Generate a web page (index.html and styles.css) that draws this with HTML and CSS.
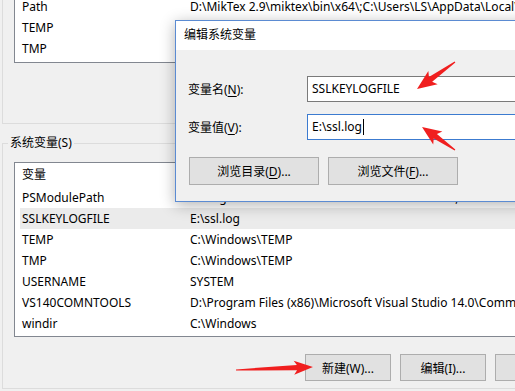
FILE: index.html
```html
<!DOCTYPE html>
<html lang="zh-CN">
<head>
  <meta charset="UTF-8">
  <title>环境变量</title>
  <link rel="stylesheet" href="styles.css">
</head>
<body>
  <div class="window">
    <div class="group-user">
      <div class="list list-user">
        <div class="row"><span class="name">Path</span><span class="value">D:\MikTex 2.9\miktex\bin\x64\;C:\Users\LS\AppData\Local\Programs</span></div>
        <div class="row"><span class="name">TEMP</span><span class="value">C:\Users\LS\AppData\Local\Temp</span></div>
        <div class="row"><span class="name">TMP</span><span class="value">C:\Users\LS\AppData\Local\Temp</span></div>
      </div>
    </div>

    <fieldset class="group-system">
      <legend>系统变量(S)</legend>
      <div class="list list-system">
        <div class="row header"><span class="name">变量</span><span class="value">值</span></div>
        <div class="row"><span class="name">PSModulePath</span><span class="value">%ProgramFiles%\WindowsPowerShell\Modules;C:\Windows</span></div>
        <div class="row selected"><span class="name">SSLKEYLOGFILE</span><span class="value">E:\ssl.log</span></div>
        <div class="row"><span class="name">TEMP</span><span class="value">C:\Windows\TEMP</span></div>
        <div class="row"><span class="name">TMP</span><span class="value">C:\Windows\TEMP</span></div>
        <div class="row"><span class="name">USERNAME</span><span class="value">SYSTEM</span></div>
        <div class="row"><span class="name">VS140COMNTOOLS</span><span class="value">D:\Program Files (x86)\Microsoft Visual Studio 14.0\Common7\Tools\</span></div>
        <div class="row"><span class="name">windir</span><span class="value">C:\Windows</span></div>
      </div>
      <div class="button-row">
        <button class="btn">新建(W)...</button>
        <button class="btn">编辑(I)...</button>
        <button class="btn">删除(L)</button>
      </div>
    </fieldset>
  </div>

  <div class="dialog">
    <div class="dialog-title">编辑系统变量</div>
    <div class="dialog-body">
      <div class="field">
        <span class="field-label">变量名(<u>N</u>):</span>
        <div class="textbox">SSLKEYLOGFILE</div>
      </div>
      <div class="field">
        <span class="field-label">变量值(<u>V</u>):</span>
        <div class="textbox focused">E:\ssl.log<span class="caret"></span></div>
      </div>
      <div class="dialog-buttons">
        <button class="btn btn-wide">浏览目录(<u>D</u>)...</button>
        <button class="btn btn-wide">浏览文件(<u>F</u>)...</button>
      </div>
    </div>
  </div>

  <!-- 红色标注箭头 -->
  <svg class="marks" width="515" height="391" viewBox="0 0 515 391">
    <g fill="#f01f1f">
      <polygon transform="translate(455 62) rotate(144.6)" points="0,-0.6 30,-2.8 27,-8 46.6,0 27,8 30,2.8 0,0.6"/>
      <polygon transform="translate(455 150) rotate(-145.1)" points="0,-0.6 24,-2.8 21,-8 40.2,0 21,8 24,2.8 0,0.6"/>
      <polygon transform="translate(236 370) rotate(-2.2)" points="0,-0.6 61,-2.6 58,-7 77,0 58,7 61,2.6 0,0.6"/>
    </g>
  </svg>
</body>
</html>
```

FILE: styles.css
```css
body {
  margin: 0;
  width: 515px;
  height: 391px;
  position: relative;
  overflow: hidden;
  background-color: #f0f0f0;
  color: #000;
  font-family: "Noto Sans", "Noto Sans CJK SC", sans-serif;
  font-size: 12px;
}
.window {
  width: 640px;
}
.group-user {
  margin-left: 2px;
  height: 123px;
  padding-left: 11px;
  border-left: 1px solid #dcdcdc;
  border-bottom: 1px solid #dcdcdc;
}
.list {
  background-color: #fff;
  border: 1px solid #828790;
  overflow: hidden;
}
.list-user {
  height: 62px;
  border-top: none;
}
.list-user .row:first-child {
  margin-top: -4px;
}
.row {
  display: flex;
  height: 21px;
  line-height: 21px;
  margin-left: 5px;
  padding-left: 2px;
  white-space: nowrap;
}
.row .name {
  width: 168px;
  flex-shrink: 0;
}
.row.header {
  height: 24px;
  line-height: 24px;
}
.row.selected {
  background-color: #ebebeb;
}
.group-system {
  margin: 11px 0 0 2px;
  padding: 11px 0 7px 11px;
  border: 1px solid #dcdcdc;
  border-right: none;
  min-width: 0;
}
.group-system legend {
  margin-left: -6px;
  padding: 0 2px;
  line-height: 16px;
}
.list-system {
  height: 173px;
}
.button-row {
  display: flex;
  gap: 9px;
  margin-top: 17px;
  padding-left: 291px;
}
.btn {
  width: 86px;
  height: 27px;
  box-sizing: border-box;
  padding: 0;
  background-color: #e1e1e1;
  border: 1px solid #adadad;
  color: #000;
  font: inherit;
}
.dialog {
  position: absolute;
  left: 175px;
  top: 20px;
  width: 380px;
  height: 182px;
  box-sizing: border-box;
  background-color: #f0f0f0;
  border: 1px solid #5b8bd2;
  box-shadow: 0 3px 14px rgba(0, 0, 0, 0.3);
}
.dialog-title {
  height: 29px;
  line-height: 27px;
  padding-left: 8px;
  background-color: #fff;
}
.dialog-body {
  padding: 26px 0 0 12px;
}
.field {
  display: flex;
  align-items: center;
  height: 26px;
}
.field + .field {
  margin-top: 12px;
}
.field-label {
  width: 119px;
  flex-shrink: 0;
}
.field u,
.btn u {
  text-underline-offset: 2px;
}
.textbox {
  width: 240px;
  height: 26px;
  box-sizing: border-box;
  padding-left: 4px;
  line-height: 24px;
  background-color: #fff;
  border: 1px solid #7a7a7a;
}
.textbox.focused {
  border-color: #3c7bd0;
}
.caret {
  display: inline-block;
  width: 0;
  height: 16px;
  margin-left: 1px;
  vertical-align: -4px;
  border-left: 1px solid #000;
}
.dialog-buttons {
  display: flex;
  gap: 9px;
  margin-top: 17px;
  margin-left: 1px;
}
.btn-wide {
  width: 130px;
  height: 28px;
}
.marks {
  position: absolute;
  left: 0;
  top: 0;
  pointer-events: none;
}
```
